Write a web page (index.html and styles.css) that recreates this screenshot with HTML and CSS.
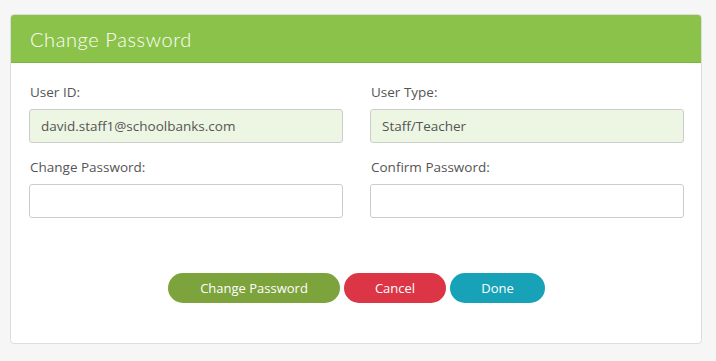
FILE: index.html
```html
<!DOCTYPE html>
<html lang="en">
<head>
  <meta charset="UTF-8">
  <title>Change Password</title>
  <link rel="stylesheet" href="styles.css">
</head>
<body>

  <div class="panel">
    <div class="panel-heading">
      <h1>Change Password</h1>
    </div>

    <div class="panel-body">
      <form class="form-grid" action="javascript:void(0);">
        <div class="field">
          <label for="user-id">User ID:</label>
          <input class="form-input readonly" id="user-id" type="text" value="david.staff1@schoolbanks.com" readonly>
        </div>
        <div class="field">
          <label for="user-type">User Type:</label>
          <input class="form-input readonly" id="user-type" type="text" value="Staff/Teacher" readonly>
        </div>
        <div class="field">
          <label for="new-password">Change Password:</label>
          <input class="form-input" id="new-password" type="password">
        </div>
        <div class="field">
          <label for="confirm-password">Confirm Password:</label>
          <input class="form-input" id="confirm-password" type="password">
        </div>
      </form>

      <div class="actions">
        <button class="btn btn-green">Change Password</button>
        <button class="btn btn-red">Cancel</button>
        <button class="btn btn-teal">Done</button>
      </div>
    </div>
  </div>

</body>
</html>
```

FILE: styles.css
```css
body{
  margin: 0;
  padding: 14px 14px 18px 10px;
  background-color: #f6f6f6;
  font-family: "Open Sans", sans-serif;
  color: #555;
}

.panel{
  background-color: white;
  border: 1px solid #ddd;
  border-radius: 4px;
  overflow: hidden;
}

.panel-heading{
  background-color: #8bc34a;
  border-bottom: 1px solid #7cb342;
  height: 47px;
  padding: 0 19px;
  display: flex;
  align-items: center;
}

h1{
  margin: 0;
  font-family: Lato, sans-serif;
  font-weight: 300;
  font-size: 20px;
  color: white;
  letter-spacing: 0.6px;
}

.panel-body{
  padding: 19px 17px 40px 18px;
}

.form-grid{
  display: grid;
  grid-template-columns: 1fr 1fr;
  column-gap: 27px;
  row-gap: 14px;
}

.field label{
  display: block;
  font-size: 13.5px;
  line-height: 20px;
  margin-bottom: 7px;
  padding-left: 1px;
}

input.form-input{
  box-sizing: border-box;
  width: 100%;
  height: 34px;
  padding: 0 11px;
  border: 1px solid #ccc;
  border-radius: 3px;
  font-family: "Open Sans", sans-serif;
  font-size: 13.5px;
  color: #555;
  background-color: white;
  outline: none;
}

input.readonly{
  background-color: #edf5e3;
}

.actions{
  margin-top: 55px;
  display: flex;
  justify-content: center;
  gap: 4px;
}

.btn{
  height: 30px;
  border: none;
  border-radius: 15px;
  color: white;
  font-family: "Open Sans", sans-serif;
  font-size: 13px;
  cursor: pointer;
}

.btn-green{
  width: 172px;
  background-color: #7ca33c;
}

.btn-red{
  width: 102px;
  background-color: #dc3545;
}

.btn-teal{
  width: 95px;
  background-color: #17a2b8;
}
```
